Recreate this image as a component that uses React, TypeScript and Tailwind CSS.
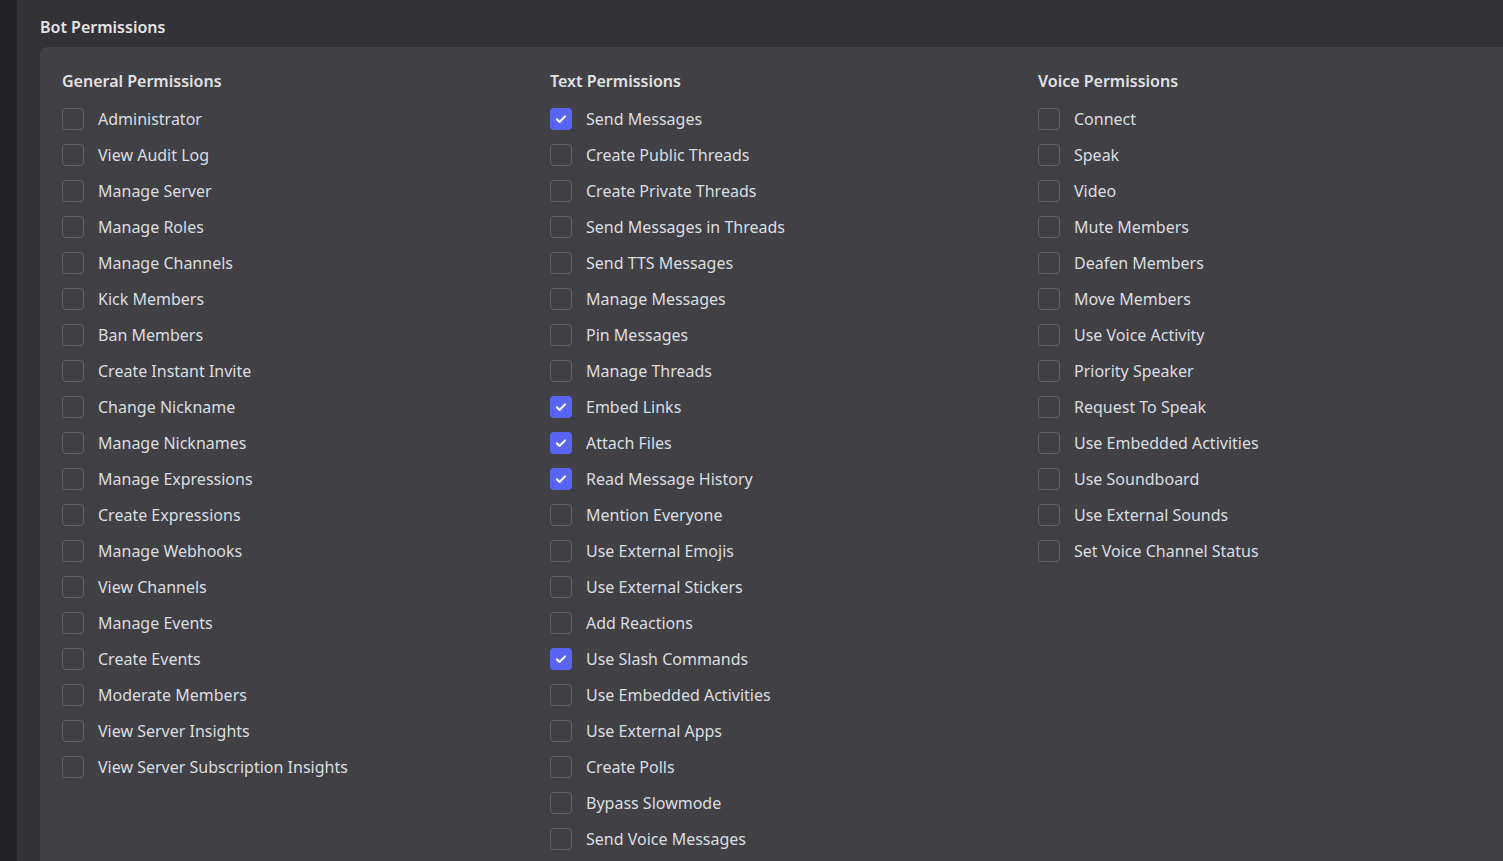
import React from "react";

const general = ["Administrator","View Audit Log","Manage Server","Manage Roles","Manage Channels","Kick Members","Ban Members","Create Instant Invite","Change Nickname","Manage Nicknames","Manage Expressions","Create Expressions","Manage Webhooks","View Channels","Manage Events","Create Events","Moderate Members","View Server Insights","View Server Subscription Insights"];
const text = ["Send Messages","Create Public Threads","Create Private Threads","Send Messages in Threads","Send TTS Messages","Manage Messages","Pin Messages","Manage Threads","Embed Links","Attach Files","Read Message History","Mention Everyone","Use External Emojis","Use External Stickers","Add Reactions","Use Slash Commands","Use Embedded Activities","Use External Apps","Create Polls","Bypass Slowmode","Send Voice Messages"];
const voice = ["Connect","Speak","Video","Mute Members","Deafen Members","Move Members","Use Voice Activity","Priority Speaker","Request To Speak","Use Embedded Activities","Use Soundboard","Use External Sounds","Set Voice Channel Status"];
const checked = new Set(["Send Messages","Embed Links","Attach Files","Read Message History","Use Slash Commands"]);

function Col({ title, items, isText }: { title: string; items: string[]; isText?: boolean }) {
  return (
    <div className="w-[488px] shrink-0">
      <div className="text-[16px] font-semibold text-[#e0e1e5] leading-[20px] mb-[10px]">{title}</div>
      <div className="flex flex-col">
        {items.map((it) => {
          const on = isText && checked.has(it);
          return (
            <div key={it} className="flex items-center h-[36px]">
              {on ? (
                <div className="w-[22px] h-[22px] rounded-[4px] bg-[#5865f2] flex items-center justify-center">
                  <svg width="14" height="14" viewBox="0 0 24 24" fill="none" stroke="white" strokeWidth="3.5" strokeLinecap="round" strokeLinejoin="round"><path d="M5 12.5l4.5 4.5L19 7.5" /></svg>
                </div>
              ) : (
                <div className="w-[22px] h-[22px] rounded-[4px] border border-[#62636a]" />
              )}
              <span className="ml-[14px] text-[16px] text-[#dbdee1]">{it}</span>
            </div>
          );
        })}
      </div>
    </div>
  );
}

export default function App() {
  return (
    <div className="w-[1503px] h-[861px] overflow-hidden flex bg-[#323237]" style={{ fontFamily: "'Noto Sans', 'Open Sans', sans-serif" }}>
      <div className="w-[17px] bg-[#222226] shrink-0" />
      <div className="flex-1 pl-[23px] pt-[15px]">
        <div className="text-[16px] font-semibold text-[#e3e4e8] leading-[24px] mb-[8px]">Bot Permissions</div>
        <div className="bg-[#404045] rounded-tl-[8px] pl-[22px] pt-[24px] pb-[20px] flex h-[900px]">
          <Col title="General Permissions" items={general} />
          <Col title="Text Permissions" items={text} isText />
          <Col title="Voice Permissions" items={voice} />
        </div>
      </div>
    </div>
  );
}
